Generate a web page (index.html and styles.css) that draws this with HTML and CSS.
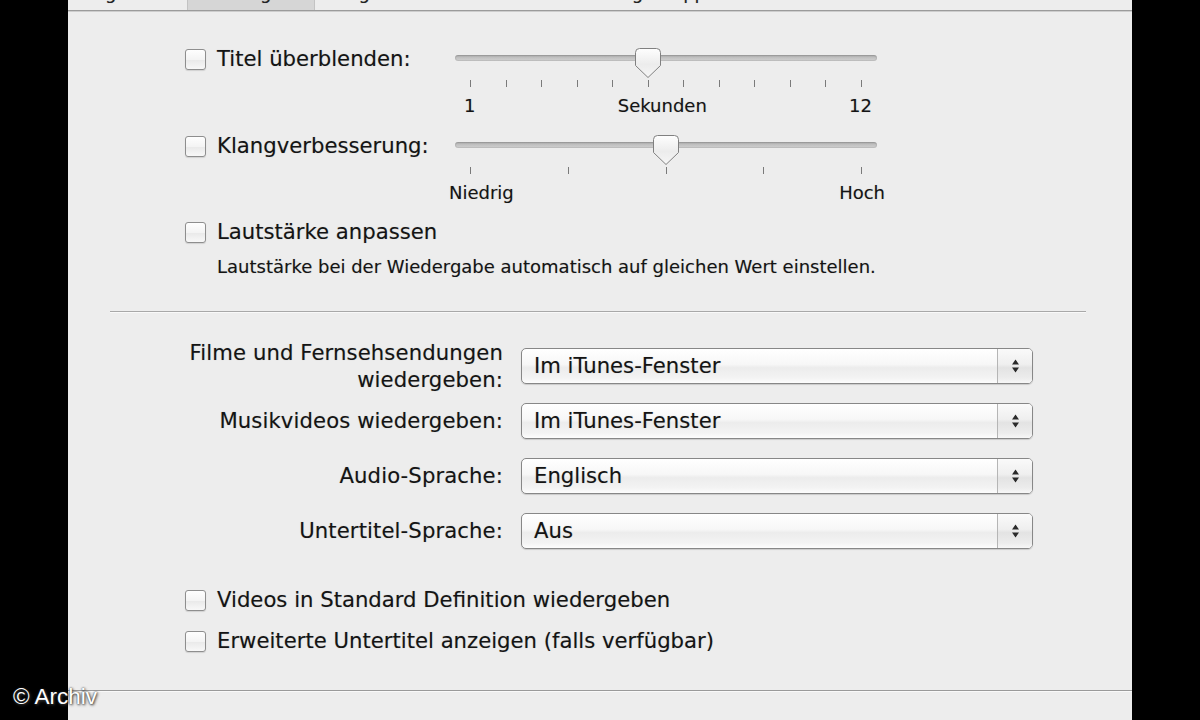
FILE: index.html
```html
<!DOCTYPE html>
<html lang="de">
<head>
<meta charset="utf-8">
<title>Wiedergabe</title>
<link rel="stylesheet" href="styles.css">
</head>
<body>
<div class="frame">
  <div class="side"></div>
  <main class="panel">
    <nav class="tabs">
      <span class="tab t1"><span class="tab-label">Allgemein</span></span>
      <span class="tab t2 active"><span class="tab-label">Wiedergabe</span></span>
      <span class="tab t3"><span class="tab-label">Freigabe</span></span>
      <span class="tab t4"><span class="tab-label">Store</span></span>
      <span class="tab t5"><span class="tab-label">Kindersicherung</span></span>
      <span class="tab t6"><span class="tab-label">Apple TV</span></span>
      <span class="tab t7"><span class="tab-label">Geräte</span></span>
      <span class="tab t8"><span class="tab-label">Erweitert</span></span>
    </nav>

    <section class="audio">
      <div class="slider-row">
        <label class="check"><span class="box"></span><span>Titel überblenden:</span></label>
        <div class="slider">
          <div class="track-area">
            <div class="track"></div>
            <div class="thumb-layer">
              <svg class="thumb" style="left:45.45%" viewBox="0 0 26 30"><defs><linearGradient id="tg1" x1="0" y1="0" x2="0" y2="1"><stop offset="0" stop-color="#fefefe"/><stop offset=".55" stop-color="#ececec"/><stop offset="1" stop-color="#f6f6f6"/></linearGradient></defs><path d="M4.5 0.5 H21.5 Q25.5 0.5 25.5 4.5 V17.5 L13 29.5 L0.5 17.5 V4.5 Q0.5 0.5 4.5 0.5 Z" fill="url(#tg1)" stroke="#808080"/></svg>
            </div>
          </div>
          <div class="ticks"><i></i><i></i><i></i><i></i><i></i><i></i><i></i><i></i><i></i><i></i><i></i><i></i></div>
          <div class="scale s1"><span>1</span><span>Sekunden</span><span>12</span></div>
        </div>
      </div>

      <div class="slider-row">
        <label class="check"><span class="box"></span><span>Klangverbesserung:</span></label>
        <div class="slider">
          <div class="track-area">
            <div class="track"></div>
            <div class="thumb-layer">
              <svg class="thumb" style="left:50%" viewBox="0 0 26 30"><defs><linearGradient id="tg2" x1="0" y1="0" x2="0" y2="1"><stop offset="0" stop-color="#fefefe"/><stop offset=".55" stop-color="#ececec"/><stop offset="1" stop-color="#f6f6f6"/></linearGradient></defs><path d="M4.5 0.5 H21.5 Q25.5 0.5 25.5 4.5 V17.5 L13 29.5 L0.5 17.5 V4.5 Q0.5 0.5 4.5 0.5 Z" fill="url(#tg2)" stroke="#808080"/></svg>
            </div>
          </div>
          <div class="ticks"><i></i><i></i><i></i><i></i><i></i></div>
          <div class="scale s2"><span>Niedrig</span><span>Hoch</span></div>
        </div>
      </div>

      <div class="loud">
        <label class="check"><span class="box"></span><span>Lautstärke anpassen</span></label>
        <p class="desc">Lautstärke bei der Wiedergabe automatisch auf gleichen Wert einstellen.</p>
      </div>
    </section>

    <div class="sep"></div>

    <section class="video">
      <div class="prow">
        <div class="plabel">Filme und Fernsehsendungen<br>wiedergeben:</div>
        <div class="popup"><span class="pval">Im iTunes-Fenster</span><span class="parrows"><svg width="9" height="16" viewBox="0 0 9 16"><path d="M4.5 1.5 L8 6.5 H1 Z M1 9.5 H8 L4.5 14.5 Z" fill="#2a2a2a"/></svg></span></div>
      </div>
      <div class="prow">
        <div class="plabel">Musikvideos wiedergeben:</div>
        <div class="popup"><span class="pval">Im iTunes-Fenster</span><span class="parrows"><svg width="9" height="16" viewBox="0 0 9 16"><path d="M4.5 1.5 L8 6.5 H1 Z M1 9.5 H8 L4.5 14.5 Z" fill="#2a2a2a"/></svg></span></div>
      </div>
      <div class="prow">
        <div class="plabel">Audio-Sprache:</div>
        <div class="popup"><span class="pval">Englisch</span><span class="parrows"><svg width="9" height="16" viewBox="0 0 9 16"><path d="M4.5 1.5 L8 6.5 H1 Z M1 9.5 H8 L4.5 14.5 Z" fill="#2a2a2a"/></svg></span></div>
      </div>
      <div class="prow">
        <div class="plabel">Untertitel-Sprache:</div>
        <div class="popup"><span class="pval">Aus</span><span class="parrows"><svg width="9" height="16" viewBox="0 0 9 16"><path d="M4.5 1.5 L8 6.5 H1 Z M1 9.5 H8 L4.5 14.5 Z" fill="#2a2a2a"/></svg></span></div>
      </div>
    </section>

    <section class="checks">
      <label class="check"><span class="box"></span><span>Videos in Standard Definition wiedergeben</span></label>
      <label class="check"><span class="box"></span><span>Erweiterte Untertitel anzeigen (falls verfügbar)</span></label>
    </section>

    <div class="sep full"></div>
  </main>
  <div class="side"></div>
</div>
<div class="watermark">© Archiv</div>
</body>
</html>
```

FILE: styles.css
```css
* { box-sizing: border-box; }
html, body { margin: 0; padding: 0; }
body {
  width: 1200px;
  height: 720px;
  overflow: hidden;
  position: relative;
  background: #000;
  font-family: "DejaVu Sans", "Noto Sans", sans-serif;
  color: #141414;
  text-shadow: 0 0 1px rgba(0, 0, 0, 0.25);
}
.frame { display: flex; height: 720px; }
.side { width: 68px; flex: none; background: #000; }
.panel { width: 1064px; flex: none; background: #ededed; }

/* tab strip (cut off at the top) */
.tabs {
  display: flex;
  height: 11px;
  overflow: hidden;
  border-bottom: 1px solid #9b9b9b;
  box-shadow: 0 1px 0 #cdcdcd;
  font-size: 18px;
  line-height: 18px;
  color: #222;
}
.tab { flex: none; text-align: center; white-space: nowrap; }
.tab-label { display: block; margin-top: -16px; }
.tab.active { background: #d6d6d6; box-shadow: inset 1px 0 #c3c3c3, inset -1px 0 #c3c3c3; }
.t1 { width: 119px; }
.t2 { width: 128px; }
.t3 { width: 100px; }
.t4 { width: 80px; }
.t5 { width: 150px; }
.t6 { width: 132px; }
.t7 { width: 120px; }
.t8 { flex: 1; }

/* checkbox + label */
.check {
  display: flex;
  align-items: center;
  height: 26px;
  font-size: 21.2px;
  line-height: 26px;
  white-space: nowrap;
}
.box {
  width: 21px;
  height: 21px;
  margin-right: 11px;
  flex: none;
  border: 1px solid #8e8e8e;
  border-radius: 3px;
  background: linear-gradient(#fefefe, #f4f4f4 50%, #eaeaea 55%, #f8f8f8);
  box-shadow: 0 1px 1px rgba(0, 0, 0, 0.12);
}

/* audio section */
.audio { margin-top: 34px; padding-left: 117px; }
.slider-row {
  display: grid;
  grid-template-columns: 270px 422px;
  align-items: start;
}
.slider-row + .slider-row { margin-top: 15px; }
.slider-row .check { margin-top: 1px; }

.slider { width: 422px; }
.track-area { position: relative; height: 33px; padding-top: 10px; }
.track {
  height: 6px;
  border-radius: 3px;
  background: linear-gradient(#a3a3a3, #c2c2c2 45%, #d0d0d0);
  box-shadow: inset 0 0 0 1px rgba(0, 0, 0, 0.08);
}
.thumb-layer { position: absolute; top: 3px; left: 15px; right: 15px; height: 30px; }
.thumb { position: absolute; top: 0; width: 26px; height: 30px; transform: translateX(-50%); }
.ticks {
  display: flex;
  justify-content: space-between;
  padding: 0 15px;
  height: 7px;
  margin-top: 2px;
}
.ticks i { width: 1px; height: 7px; background: #7a7a7a; }
.scale {
  display: flex;
  justify-content: space-between;
  margin-top: 8px;
  height: 22px;
  font-size: 18px;
  line-height: 22px;
}
.scale.s1 { padding: 0 5px 0 9px; }
.scale.s2 { margin-left: -6px; margin-right: -8px; }

.loud { margin-top: 15px; }
.desc {
  margin: 11px 0 0 32px;
  font-size: 18px;
  line-height: 22px;
  white-space: nowrap;
}

.sep {
  margin: 33px 46px 0 42px;
  height: 2px;
  border-top: 1px solid #a8a8a8;
  border-bottom: 1px solid #f9f9f9;
}
.sep.full { margin: 36px 0 0; border-top-color: #9a9a9a; }

/* video section */
.video { margin-top: 25px; }
.prow { display: flex; align-items: center; height: 55px; }
.plabel {
  width: 335px;
  margin-left: 100px;
  text-align: right;
  font-size: 21.2px;
  line-height: 27px;
  white-space: nowrap;
}
.plabel { letter-spacing: 0.1px; }
.popup {
  display: flex;
  width: 512px;
  height: 36px;
  margin-left: 18px;
  border: 1px solid #878787;
  border-radius: 5px;
  overflow: hidden;
  background: linear-gradient(#ffffff, #f7f7f7 45%, #ececec 55%, #f3f3f3 85%, #fdfdfd);
  box-shadow: 0 1px 1px rgba(0, 0, 0, 0.15);
}
.pval { flex: 1; padding-left: 12px; font-size: 21.2px; line-height: 34px; white-space: nowrap; }
.parrows {
  width: 35px;
  border-left: 1px solid #b5b5b5;
  display: flex;
  align-items: center;
  justify-content: center;
  background: linear-gradient(#fafafa, #efefef 45%, #e3e3e3 55%, #ececec 85%, #f7f7f7);
}

/* lower checkboxes */
.checks { margin-top: 29px; padding-left: 117px; }
.checks .check + .check { margin-top: 15px; }

.watermark {
  position: absolute;
  left: 13px;
  top: 684px;
  font-family: "Liberation Sans", Arial, sans-serif;
  font-size: 22.5px;
  line-height: 26px;
  color: #fff;
  text-shadow: 0 0 2px #222, 1px 1px 3px #444;
  white-space: nowrap;
}
```
